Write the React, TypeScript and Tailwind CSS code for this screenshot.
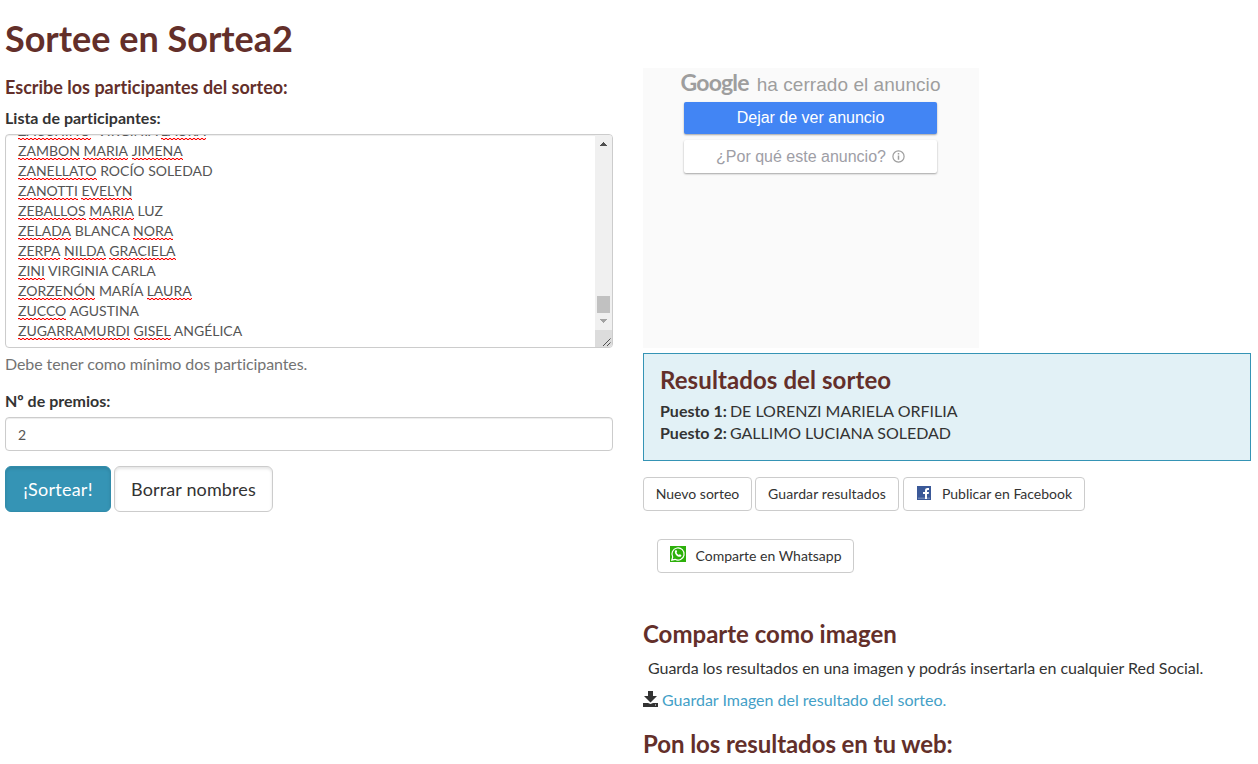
import React from 'react';

const names: [string, boolean][][] = [
  [['ZACCHINO', true], [' VIRGINIA', false], ['LAURA', true]],
  [['ZAMBON', true], ['MARIA', true], ['JIMENA', true]],
  [['ZANELLATO', true], ['ROCÍO', false], ['SOLEDAD', false]],
  [['ZANOTTI', true], ['EVELYN', true]],
  [['ZEBALLOS', true], ['MARIA', true], ['LUZ', false]],
  [['ZELADA', true], ['BLANCA', false], ['NORA', true]],
  [['ZERPA', true], ['NILDA', true], ['GRACIELA', true]],
  [['ZINI', true], ['VIRGINIA', false], ['CARLA', false]],
  [['ZORZENÓN', true], ['MARÍA', false], ['LAURA', true]],
  [['ZUCCO', true], ['AGUSTINA', false]],
  [['ZUGARRAMURDI', true], ['GISEL', true], ['ANGÉLICA', false]],
];

function Misspelt({ children }: { children: React.ReactNode }) {
  return (
    <span className="relative inline-block h-5">
      {children}
      <span className="absolute bottom-[2px] left-0 h-px w-full bg-[linear-gradient(90deg,#f00_50%,#ff000030_50%)] bg-[length:4px_1px]" />
      <span className="absolute bottom-px left-0 h-px w-full bg-[linear-gradient(90deg,#ff000030_50%,#f00_50%)] bg-[length:4px_1px]" />
    </span>
  );
}

function Scrollbar() {
  return (
    <div className="flex w-[17px] shrink-0 flex-col bg-[#f0f0f0]">
      <svg viewBox="0 0 17 17" className="h-[17px] w-[17px]" shapeRendering="crispEdges">
        <path d="M8 7h1v1h1v1h1v1h1v1H5v-1h1V9h1V8h1z" fill="#505050" />
      </svg>
      <div className="grow" />
      <div className="ml-[2px] h-[17px] w-[13px] bg-[#c1c1c1]" />
      <svg viewBox="0 0 17 17" className="h-[17px] w-[17px]" shapeRendering="crispEdges">
        <path d="M5 6h7v1h-1v1h-1v1H9v1H8V9H7V8H6V7H5z" fill="#a3a3a3" />
      </svg>
      <svg viewBox="0 0 17 17" className="h-[17px] w-[17px] bg-[#dcdcdc]">
        <path d="M8 16 15.500 8.500M12 16l3.500-3.500" stroke="#505050" fill="none" />
      </svg>
    </div>
  );
}

function SmallButton({ className, children }: { className: string; children: React.ReactNode }) {
  return (
    <button className={`flex h-[34px] items-center justify-center rounded border border-[#ccc] bg-white text-sm whitespace-nowrap ${className}`}>
      {children}
    </button>
  );
}

export default function App() {
  return (
    <div className="h-[764px] w-[1258px] overflow-hidden bg-white px-[5px] pt-[18px] font-['Lato',sans-serif] text-base leading-[22px] text-[#333] [font-variant-ligatures:none]">
      <h1 className="h-[50px] text-4xl leading-10 font-bold text-[#632f2a]">Sortee en Sortea2</h1>
      <div className="flex gap-[30px]">
        <section className="w-[608px] shrink-0">
          <h4 className="pt-2 text-lg leading-[22px] font-bold text-[#632f2a]">Escribe los participantes del sorteo:</h4>
          <label className="mt-[9px] block h-[27px] font-bold">Lista de participantes:</label>
          <div className="flex h-[214px] overflow-hidden rounded border border-[#ccc] shadow-[inset_0_1px_1px_rgba(0,0,0,0.075)]">
            <div className="flex grow flex-col justify-end pb-[6px] pl-3 text-sm leading-5 text-[#555]">
              {names.map((row, i) => (
                <div key={i} className="h-5 shrink-0 whitespace-pre">
                  {row.map(([word, bad], j) => (
                    <React.Fragment key={j}>
                      {j > 0 && ' '}
                      {bad ? <Misspelt>{word}</Misspelt> : word}
                    </React.Fragment>
                  ))}
                </div>
              ))}
            </div>
            <Scrollbar />
          </div>
          <p className="mt-[5px] tracking-[-0.08px] text-[#737373]">Debe tener como mínimo dos participantes.</p>
          <label className="mt-[15px] block h-[27px] font-bold">Nº de premios:</label>
          <div className="flex h-[34px] items-center rounded border border-[#ccc] px-3 pt-[2px] text-sm text-[#555] shadow-[inset_0_1px_1px_rgba(0,0,0,0.075)]">2</div>
          <div className="mt-[15px] flex gap-[3px] text-lg">
            <button className="h-[46px] w-[106px] rounded-md border border-[#318cab] bg-[#3594b5] tracking-[0.25px] text-white shadow-[inset_0_2px_3px_rgba(0,0,0,0.1)]">¡Sortear!</button>
            <button className="h-[46px] w-[159px] rounded-md border border-[#ccc] bg-white tracking-[0.13px] shadow-[inset_0_2px_3px_rgba(0,0,0,0.1)]">Borrar nombres</button>
          </div>
        </section>
        <section className="w-[608px] shrink-0">
          <div className="flex h-[280px] w-[336px] flex-col items-center bg-[#fafafa] pr-px font-['Liberation_Sans',sans-serif]">
            <div className="flex h-[34px] items-baseline gap-2 whitespace-nowrap text-[#9e9e9e]">
              <span className="font-['Lato',sans-serif] text-[23px] leading-[29px] font-bold tracking-[-0.8px]">Google</span>
              <span className="text-[19px] tracking-[0.05px]">ha cerrado el anuncio</span>
            </div>
            <div className="flex h-8 w-[253px] items-center justify-center rounded-[2px] bg-[#4285f4] text-base text-white shadow-[0_1px_2px_rgba(0,0,0,0.35)]">Dejar de ver anuncio</div>
            <div className="mt-[6px] flex h-[33px] w-[253px] items-center justify-center gap-[6px] rounded-[2px] bg-white text-base text-[#9e9ea6] shadow-[0_1px_2px_rgba(0,0,0,0.35)]">
              ¿Por qué este anuncio?
              <svg viewBox="0 0 13 13" className="h-[13px] w-[13px]" fill="none" stroke="#9e9e9e" strokeWidth="1.2">
                <circle cx="6.5" cy="6.5" r="5.6" />
                <path d="M6.5 3v1.400M6.500 5.500v4.300" strokeWidth="1.5" />
              </svg>
            </div>
          </div>
          <div className="mt-[5px] h-[108px] border border-[#3594b5] bg-[#e2f1f6] px-4 pt-[13px]">
            <h3 className="mb-[7px] text-2xl leading-[26px] font-bold tracking-[0.09px] text-[#632f2a]">Resultados del sorteo</h3>
            <p><b className="mr-[-1px]">Puesto 1:</b> DE LORENZI MARIELA ORFILIA</p>
            <p><b className="mr-[-1px]">Puesto 2:</b> GALLIMO LUCIANA SOLEDAD</p>
          </div>
          <div className="mt-4 flex">
            <SmallButton className="mr-[3px] w-[109px]">Nuevo sorteo</SmallButton>
            <SmallButton className="mr-1 w-[144px] tracking-[0.1px]">Guardar resultados</SmallButton>
            <SmallButton className="w-[182px]">
              <svg viewBox="0 0 14 14" className="mr-[11px] mb-[3px] ml-[1px] h-[14px] w-[14px]">
                <path d="M0 0h14v14H0z" fill="#3b5998" />
                <path d="M1 11.500h12V13H1z" fill="#6d84b4" />
                <path d="M8 13V8H6V6h2V4.500C8 2.800 9 2 10.500 2H12v2h-1.200c-.6 0-.8.300-.8.900V6h2l-.3 2H10v5z" fill="#fff" />
              </svg>
              Publicar en Facebook
            </SmallButton>
          </div>
          <div className="mt-7 ml-[14px] flex">
            <SmallButton className="w-[197px]">
              <svg viewBox="0 0 16 16" className="mr-[10px] mb-1 h-4 w-4">
                <path d="M0 0h16v16H0z" fill="#2cb00a" />
                <path d="M1.800 14.200l.9-3.200A6.100 6.100 0 1 1 5 13.300z" fill="none" stroke="#fff" strokeWidth="1.200" />
                <path d="M5.500 4.300c.5-.4.900-.3 1.100.2l.5 1.200c.1.300-.4.800-.6 1 .5 1.100 1.300 1.800 2.400 2.300.3-.3.700-.9 1-.8l1.300.7c.5.300-.1 1.500-.8 1.800-1 .5-2.900-.2-4.100-1.500C4.900 7.700 4.300 5.600 5.500 4.300z" fill="#fff" />
              </svg>
              Comparte en Whatsapp
            </SmallButton>
          </div>
          <h3 className="mt-12 text-2xl leading-[26px] font-bold text-[#632f2a]">Comparte como imagen</h3>
          <p className="mt-[10px] ml-[5px] tracking-[-0.045px]">Guarda los resultados en una imagen y podrás insertarla en cualquier Red Social.</p>
          <p className="mt-[10px] flex gap-1 text-[#449fc7]">
            <svg viewBox="0 0 15 16" className="mt-[2px] h-4 w-[15px]" fill="#333">
              <path d="M5 0h5v5h4L7.500 11.500 1 5h4zM0 12h5l2.500 1L10 12h5v4H0zM12 13.500v1h1v-1z" fillRule="evenodd" />
            </svg>
            Guardar Imagen del resultado del sorteo.
          </p>
          <h3 className="mt-5 text-2xl leading-[26px] font-bold tracking-[-0.07px] text-[#632f2a]">Pon los resultados en tu web:</h3>
        </section>
      </div>
    </div>
  );
}
